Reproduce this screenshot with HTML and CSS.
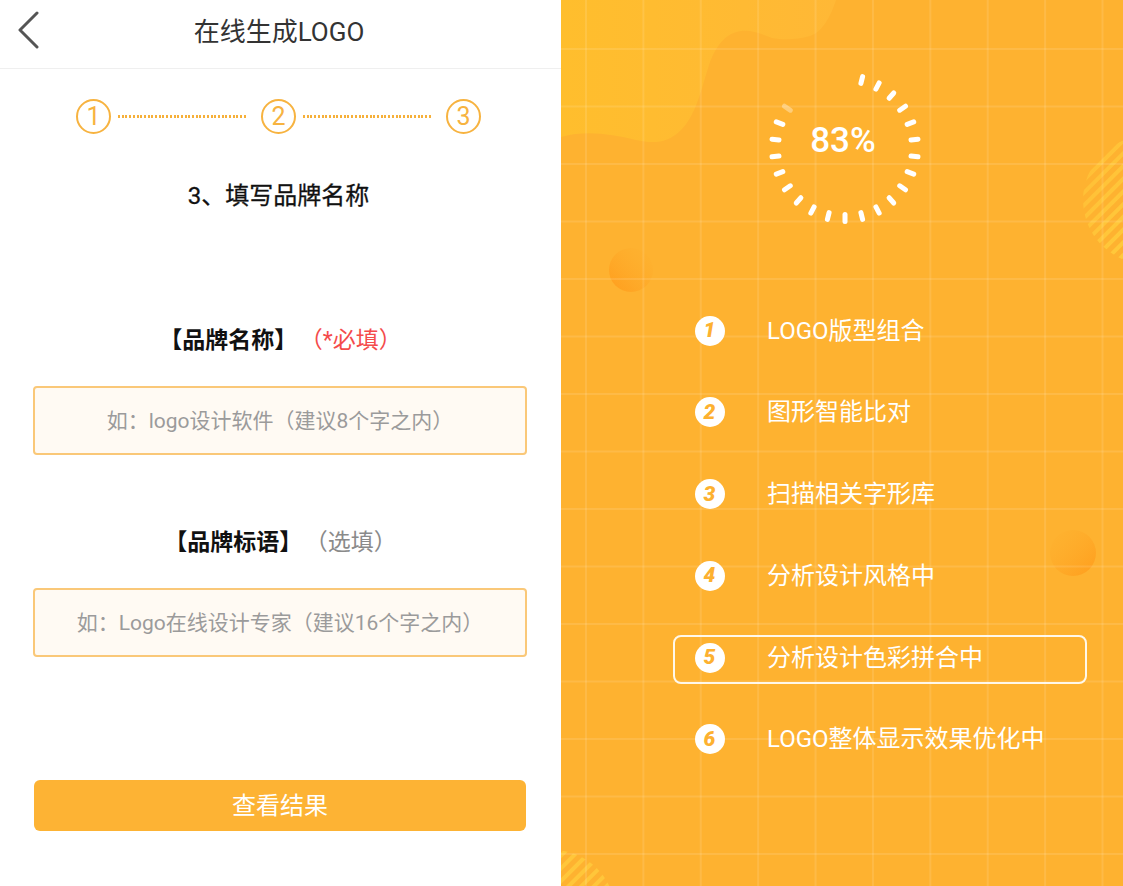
FILE: index.html
```html
<!DOCTYPE html>
<html lang="zh-CN">
<head>
<meta charset="utf-8">
<title>在线生成LOGO</title>
<link rel="stylesheet" href="styles.css">
</head>
<body>
<div class="page">
  <section class="form-panel">
    <header class="topbar">
      <svg class="back" viewBox="0 0 24 38" aria-label="返回">
        <polyline points="20,2 3,19 20,36" />
      </svg>
      <h1 class="title">在线生成LOGO</h1>
      <span></span>
    </header>

    <div class="progress">
      <span class="step-circle">1</span>
      <span class="dots"></span>
      <span class="step-circle">2</span>
      <span class="dots"></span>
      <span class="step-circle">3</span>
    </div>

    <h2 class="step-title">3、填写品牌名称</h2>

    <div class="field-label first"><b>【品牌名称】</b><span class="req">（*必填）</span></div>
    <input class="input" type="text" placeholder="如：logo设计软件（建议8个字之内）">

    <div class="field-label second"><b>【品牌标语】</b><span class="opt">（选填）</span></div>
    <input class="input" type="text" placeholder="如：Logo在线设计专家（建议16个字之内）">

    <button class="submit" type="button">查看结果</button>
  </section>

  <section class="progress-panel">
    <svg class="decor" viewBox="0 0 562 886" preserveAspectRatio="none" aria-hidden="true">
      <defs>
        <linearGradient id="blobGrad" x1="0" y1="0" x2="1" y2="0">
          <stop offset="0" stop-color="#FFBE2D"/>
          <stop offset="1" stop-color="#FFB836"/>
        </linearGradient>
        <linearGradient id="ballA" x1="0" y1="1" x2="1" y2="0">
          <stop offset="0" stop-color="#FF9C1C"/>
          <stop offset="1" stop-color="#FEB230" stop-opacity="0.2"/>
        </linearGradient>
        <linearGradient id="ballB" x1="0" y1="0" x2="1" y2="1">
          <stop offset="0" stop-color="#FEB230" stop-opacity="0.3"/>
          <stop offset="1" stop-color="#FF9D1C"/>
        </linearGradient>
        <linearGradient id="stripeFade" x1="0" y1="0" x2="1" y2="1">
          <stop offset="0" stop-color="#fff" stop-opacity="0.3"/>
          <stop offset="1" stop-color="#fff" stop-opacity="1"/>
        </linearGradient>
        <mask id="fadeMask" maskUnits="userSpaceOnUse" x="500" y="120" width="62" height="170">
          <rect x="500" y="120" width="62" height="170" fill="url(#stripeFade)"/>
        </mask>
        <pattern id="stripes" patternUnits="userSpaceOnUse" width="9" height="9" patternTransform="rotate(45)">
          <rect x="0" y="0" width="4" height="9" fill="#FFCB3C"/>
        </pattern>
        <clipPath id="clipR"><circle cx="586" cy="200" r="64"/></clipPath>
        <clipPath id="clipL"><circle cx="-8" cy="912" r="62"/></clipPath>
      </defs>
      <path fill="url(#blobGrad)" d="M0,0 H275 C270,15 262,32 249,36 C235,40 222,40 211,38 C200,34 192,30 180,31 C165,33 155,45 148,65 C140,90 135,115 120,130 C105,145 90,143 75,140 C50,134 25,130 0,137 Z"/>
      <circle cx="70" cy="270" r="22" fill="url(#ballA)"/>
      <circle cx="512" cy="553" r="23" fill="url(#ballB)"/>
      <g mask="url(#fadeMask)">
        <rect x="500" y="120" width="62" height="170" fill="url(#stripes)" clip-path="url(#clipR)"/>
      </g>
      <rect x="0" y="830" width="70" height="60" fill="url(#stripes)" clip-path="url(#clipL)" opacity="0.8"/>
    </svg>

    <div class="spinner">
      <svg viewBox="0 0 160 160" aria-hidden="true">
        <g class="ticks" transform="translate(80,80)">
          <line x1="0" y1="-73.5" x2="0" y2="-66.5" transform="rotate(13.85)"/>
          <line x1="0" y1="-73.5" x2="0" y2="-66.5" transform="rotate(27.69)"/>
          <line x1="0" y1="-73.5" x2="0" y2="-66.5" transform="rotate(41.54)"/>
          <line x1="0" y1="-73.5" x2="0" y2="-66.5" transform="rotate(55.38)"/>
          <line x1="0" y1="-73.5" x2="0" y2="-66.5" transform="rotate(69.23)"/>
          <line x1="0" y1="-73.5" x2="0" y2="-66.5" transform="rotate(83.08)"/>
          <line x1="0" y1="-73.5" x2="0" y2="-66.5" transform="rotate(96.92)"/>
          <line x1="0" y1="-73.5" x2="0" y2="-66.5" transform="rotate(110.77)"/>
          <line x1="0" y1="-73.5" x2="0" y2="-66.5" transform="rotate(124.62)"/>
          <line x1="0" y1="-73.5" x2="0" y2="-66.5" transform="rotate(138.46)"/>
          <line x1="0" y1="-73.5" x2="0" y2="-66.5" transform="rotate(152.31)"/>
          <line x1="0" y1="-73.5" x2="0" y2="-66.5" transform="rotate(166.15)"/>
          <line x1="0" y1="-73.5" x2="0" y2="-66.5" transform="rotate(180)"/>
          <line x1="0" y1="-73.5" x2="0" y2="-66.5" transform="rotate(193.85)"/>
          <line x1="0" y1="-73.5" x2="0" y2="-66.5" transform="rotate(207.69)"/>
          <line x1="0" y1="-73.5" x2="0" y2="-66.5" transform="rotate(221.54)"/>
          <line x1="0" y1="-73.5" x2="0" y2="-66.5" transform="rotate(235.38)"/>
          <line x1="0" y1="-73.5" x2="0" y2="-66.5" transform="rotate(249.23)"/>
          <line x1="0" y1="-73.5" x2="0" y2="-66.5" transform="rotate(263.08)"/>
          <line x1="0" y1="-73.5" x2="0" y2="-66.5" transform="rotate(276.92)"/>
          <line x1="0" y1="-73.5" x2="0" y2="-66.5" transform="rotate(290.77)"/>
          <line class="fade" x1="0" y1="-73.5" x2="0" y2="-66.5" transform="rotate(304.62)"/>
        </g>
      </svg>
      <span class="percent">83%</span>
    </div>

    <ol class="tasks">
      <li class="task"><span class="num">1</span>LOGO版型组合</li>
      <li class="task"><span class="num">2</span>图形智能比对</li>
      <li class="task"><span class="num">3</span>扫描相关字形库</li>
      <li class="task"><span class="num">4</span>分析设计风格中</li>
      <li class="task current"><span class="num">5</span>分析设计色彩拼合中</li>
      <li class="task"><span class="num">6</span>LOGO整体显示效果优化中</li>
    </ol>
  </section>
</div>
</body>
</html>
```

FILE: styles.css
```css
* {
  box-sizing: border-box;
  margin: 0;
  padding: 0;
}

html, body {
  width: 1123px;
  height: 886px;
  overflow: hidden;
}

body {
  font-family: Roboto, "Noto Sans CJK SC", sans-serif;
  background: #ffffff;
}

.page {
  display: flex;
  height: 886px;
}

/* ---------- left: form ---------- */
.form-panel {
  width: 561px;
  flex: none;
  background: #ffffff;
  display: flex;
  flex-direction: column;
}

.topbar {
  height: 69px;
  border-bottom: 1px solid #efefef;
  display: grid;
  grid-template-columns: 60px 1fr 60px;
  align-items: center;
}

.back {
  width: 24px;
  height: 38px;
  margin-left: 17px;
  margin-top: -8px;
}

.back polyline {
  fill: none;
  stroke: #555555;
  stroke-width: 3;
  stroke-linecap: round;
  stroke-linejoin: round;
}

.title {
  font-size: 26px;
  font-weight: 400;
  color: #333333;
  text-align: center;
  line-height: 1;
  margin-top: -5px;
  padding-right: 3px;
}

.progress {
  display: flex;
  align-items: center;
  margin-top: 30px;
  padding-left: 76px;
  height: 35px;
}

.step-circle {
  width: 35px;
  height: 35px;
  flex: none;
  border: 2px solid #F7B340;
  border-radius: 50%;
  color: #F7B340;
  font-size: 25px;
  line-height: 1;
  display: flex;
  align-items: center;
  justify-content: center;
}

.dots {
  width: 130px;
  height: 2.5px;
  margin: 0 13px 0 7px;
  background: repeating-linear-gradient(to right, #F6B03A 0 2px, transparent 2px 3.7px);
}

.step-title {
  font-size: 24px;
  font-weight: 400;
  color: #111111;
  text-align: center;
  line-height: 32px;
  margin-top: 46px;
  padding-right: 4px;
  -webkit-text-stroke: 0.3px #111111;
}

.field-label {
  text-align: center;
  font-size: 23px;
  line-height: 30px;
  color: #111111;
}

.field-label.first {
  margin-top: 114px;
}

.field-label.second {
  margin-top: 73px;
}

.field-label b {
  font-weight: 700;
}

.req,
.opt {
  margin-left: 14px;
}

.req {
  color: #F44B4B;
}

.opt {
  color: #8a8a8a;
}

.input {
  display: block;
  width: 494px;
  height: 69px;
  margin: 30px 0 0 33px;
  border: 2px solid #FAC878;
  border-radius: 4px;
  background: #FFFAF3;
  text-align: center;
  font-family: inherit;
  font-size: 21px;
  color: #666666;
  outline: none;
}

.input::placeholder {
  color: #9b9b9b;
}

.submit {
  width: 492px;
  height: 51px;
  margin: 123px 0 0 34px;
  padding-bottom: 5px;
  background: #FDB334;
  border: none;
  border-radius: 6px;
  color: #ffffff;
  font-family: inherit;
  font-size: 24px;
}

/* ---------- right: progress ---------- */
.progress-panel {
  flex: 1;
  position: relative;
  overflow: hidden;
  background: #FEB230;
  display: flex;
  flex-direction: column;
}

.decor {
  position: absolute;
  left: 0;
  top: 0;
  width: 100%;
  height: 100%;
}

.progress-panel::after {
  content: "";
  position: absolute;
  left: 0;
  top: 0;
  right: 0;
  bottom: 0;
  pointer-events: none;
  background-image:
    linear-gradient(to right, rgba(255, 255, 255, 0.11) 1.5px, transparent 1.5px),
    linear-gradient(to bottom, rgba(255, 255, 255, 0.11) 1.5px, transparent 1.5px);
  background-size: 57.4px 57.5px;
  background-position: 24px 48px;
}

.spinner {
  position: relative;
  z-index: 1;
  width: 160px;
  height: 160px;
  margin: 68px 0 0 204px;
}

.spinner svg {
  display: block;
  width: 160px;
  height: 160px;
}

.ticks line {
  stroke: #ffffff;
  stroke-width: 5;
  stroke-linecap: round;
}

.ticks line.fade {
  stroke: rgba(255, 255, 255, 0.35);
}

.percent {
  position: absolute;
  left: 0;
  right: 4px;
  top: 53px;
  text-align: center;
  font-size: 35px;
  font-weight: 500;
  line-height: 40px;
  color: #ffffff;
}

.tasks {
  position: relative;
  z-index: 1;
  list-style: none;
  margin: 80px 0 0 112px;
  width: 414px;
  display: flex;
  flex-direction: column;
  gap: 32.8px;
}

.task {
  height: 49px;
  border: 2px solid transparent;
  border-radius: 8px;
  display: flex;
  align-items: center;
  padding-left: 20px;
  padding-bottom: 4px;
  color: #ffffff;
  font-size: 24px;
  line-height: 1;
}

.task.current {
  border-color: rgba(255, 255, 255, 0.9);
}

.num {
  width: 30px;
  height: 30px;
  flex: none;
  border-radius: 50%;
  background: #ffffff;
  color: #FDB130;
  font-style: italic;
  font-weight: 900;
  font-size: 21px;
  display: flex;
  align-items: center;
  justify-content: center;
  margin-right: 42px;
  padding-right: 1px;
}
```
